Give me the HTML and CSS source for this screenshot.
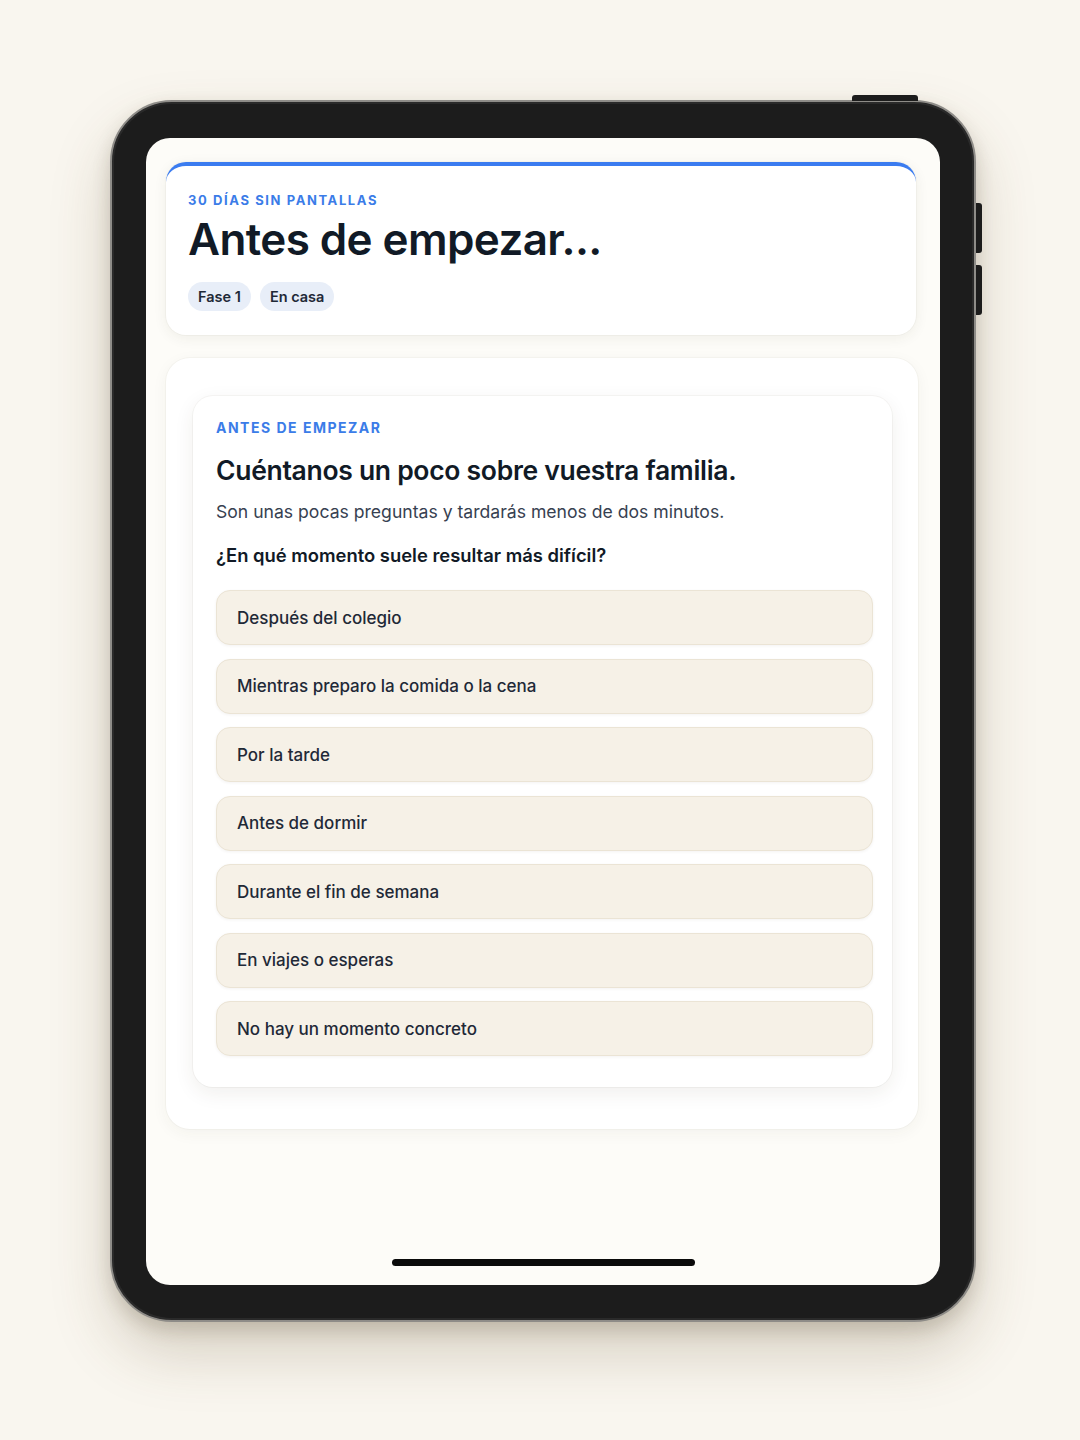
FILE: index.html
```html
<!DOCTYPE html>
<html lang="es">
<head>
<meta charset="utf-8">
<title>Antes de empezar</title>
<link rel="stylesheet" href="styles.css">
</head>
<body>
<div class="stage">
  <div class="device">
    <span class="btn-top"></span>
    <span class="btn-side btn-side-1"></span>
    <span class="btn-side btn-side-2"></span>
    <div class="screen">
      <div class="page">
        <header class="hero">
          <div class="eyebrow">30 DÍAS SIN PANTALLAS</div>
          <h1 class="title">Antes de empezar...</h1>
          <div class="chips">
            <span class="chip">Fase 1</span>
            <span class="chip">En casa</span>
          </div>
        </header>
        <section class="panel">
          <div class="card">
            <div class="eyebrow eyebrow-lg">ANTES DE EMPEZAR</div>
            <h2 class="card-title">Cuéntanos un poco sobre vuestra familia.</h2>
            <p class="lead">Son unas pocas preguntas y tardarás menos de dos minutos.</p>
            <p class="question">¿En qué momento suele resultar más difícil?</p>
            <div class="options">
              <button class="option">Después del colegio</button>
              <button class="option">Mientras preparo la comida o la cena</button>
              <button class="option">Por la tarde</button>
              <button class="option">Antes de dormir</button>
              <button class="option">Durante el fin de semana</button>
              <button class="option">En viajes o esperas</button>
              <button class="option">No hay un momento concreto</button>
            </div>
          </div>
        </section>
      </div>
      <div class="home-indicator"></div>
    </div>
  </div>
</div>
</body>
</html>
```

FILE: styles.css
```css
* { box-sizing: border-box; }
html, body { margin: 0; padding: 0; }
body {
  width: 1080px;
  height: 1440px;
  background: #f9f6ef;
  font-family: Inter, "Noto Sans", sans-serif;
  color: #111827;
  overflow: hidden;
}
.stage {
  padding: 100px 0 0 110px;
}
.device {
  position: relative;
  width: 866px;
  height: 1222px;
  border-radius: 62px;
  background: #1c1c1c;
  border: 2px solid #8e8c88;
  box-shadow: inset 0 0 0 2px #2a2a2a, 0 30px 60px rgba(90, 70, 30, 0.22), 0 8px 18px rgba(60, 50, 30, 0.18);
  padding: 36px 34px 35px 34px;
}
.btn-top {
  position: absolute;
  top: -7px;
  left: 740px;
  width: 66px;
  height: 6px;
  background: #1c1c1c;
  border-radius: 3px 3px 0 0;
}
.btn-side {
  position: absolute;
  right: -8px;
  width: 6px;
  height: 50px;
  background: #1c1c1c;
  border-radius: 0 3px 3px 0;
}
.btn-side-1 { top: 101px; }
.btn-side-2 { top: 163px; }
.screen {
  width: 100%;
  height: 100%;
  background: #fdfcf8;
  border-radius: 24px;
  overflow: hidden;
  display: flex;
  flex-direction: column;
  justify-content: space-between;
  padding: 24px 22px 19px 20px;
}
.page {
  display: flex;
  flex-direction: column;
  gap: 23px;
}
.hero {
  background: #ffffff;
  border-radius: 20px;
  border-top: 4px solid #3b7cf0;
  box-shadow: 0 3px 14px rgba(60, 50, 30, 0.07), 0 0 0 1px rgba(60, 50, 30, 0.03);
  padding: 26px 22px 24px 22px;
  margin-right: 2px;
}
.eyebrow {
  color: #3b7ce8;
  font-size: 13px;
  font-weight: 700;
  letter-spacing: 1.6px;
  line-height: 16px;
}
.eyebrow-lg {
  font-size: 14px;
  letter-spacing: 1.5px;
}
.title {
  margin: 5px 0 0 0;
  font-size: 44px;
  font-weight: 600;
  letter-spacing: -0.6px;
  line-height: 52px;
  color: #111a26;
}
.chips {
  display: flex;
  gap: 9px;
  margin-top: 17px;
}
.chip {
  background: #e8eef8;
  color: #1f2937;
  font-size: 14.5px;
  font-weight: 600;
  line-height: 29px;
  height: 29px;
  padding: 0 10px;
  border-radius: 15px;
}
.panel {
  background: #ffffff;
  border-radius: 24px;
  box-shadow: 0 4px 16px rgba(60, 50, 30, 0.05), 0 0 0 1px rgba(60, 50, 30, 0.03);
  padding: 38px 26px 42px 27px;
}
.card {
  background: #ffffff;
  border-radius: 20px;
  box-shadow: 0 6px 20px rgba(60, 50, 30, 0.08), 0 0 0 1px rgba(60, 50, 30, 0.04);
  padding: 24px 19px 31px 23px;
}
.card-title {
  margin: 17px 0 0 0;
  font-size: 26.5px;
  font-weight: 600;
  letter-spacing: -0.3px;
  line-height: 34px;
  color: #111a26;
}
.lead {
  margin: 13px 0 0 0;
  font-size: 17.6px;
  line-height: 24px;
  color: #374151;
}
.question {
  margin: 19px 0 0 0;
  font-size: 18.4px;
  font-weight: 600;
  line-height: 24px;
  color: #111a26;
}
.options {
  display: flex;
  flex-direction: column;
  gap: 13.5px;
  margin-top: 23px;
}
.option {
  display: block;
  width: 100%;
  text-align: left;
  height: 55px;
  background: #f6f1e7;
  border: 1px solid #ebe4d5;
  border-radius: 14px;
  padding: 0 20px;
  font-family: Inter, "Noto Sans", sans-serif;
  font-size: 17px;
  font-weight: 500;
  color: #1f2937;
  box-shadow: 0 1px 3px rgba(60, 50, 30, 0.06);
}
.home-indicator {
  align-self: center;
  width: 303px;
  height: 7px;
  border-radius: 4px;
  background: #0a0a0a;
  margin-left: 2px;
}
```
